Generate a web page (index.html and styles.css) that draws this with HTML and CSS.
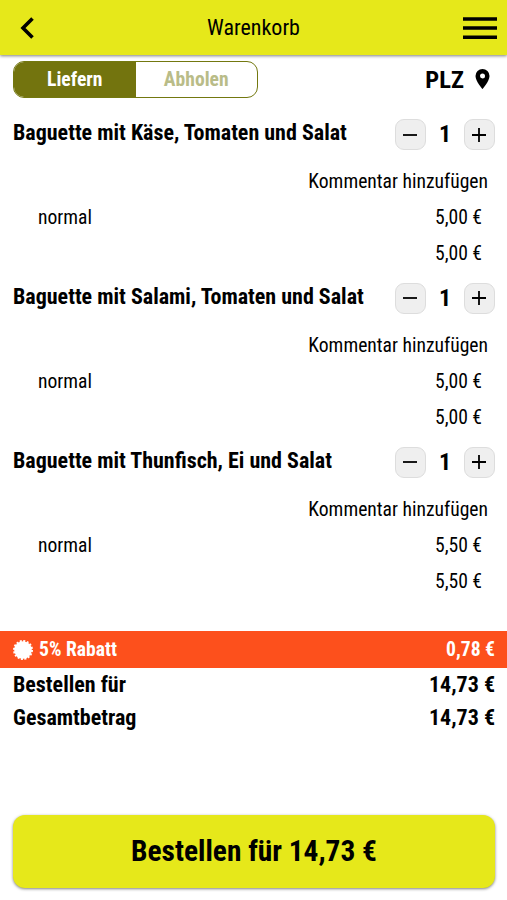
FILE: index.html
```html
<!DOCTYPE html>
<html lang="de">
<head>
<meta charset="utf-8">
<title>Warenkorb</title>
<link rel="stylesheet" href="styles.css">
</head>
<body>
<header class="topbar">
  <svg class="back" width="16" height="24" viewBox="0 0 16 24"><path d="M13.500 2.500 4 12l9.500 9.500" fill="none" stroke="#000" stroke-width="3.600"/></svg>
  <h1 class="title">Warenkorb</h1>
  <svg class="menu" width="34" height="24" viewBox="0 0 34 24"><path d="M0 3h34M0 12h34M0 21.200h34" stroke="#000" stroke-width="3.600"/></svg>
</header>
<main>
  <div class="mode">
    <div class="toggle"><span class="tab active">Liefern</span><span class="tab">Abholen</span></div>
    <div class="plz"><span>PLZ</span><svg width="15" height="20" viewBox="0 0 14 20"><path fill-rule="evenodd" d="M7 0a7 7 0 0 0-7 7c0 5.200 7 13 7 13s7-7.800 7-13a7 7 0 0 0-7-7zm0 4.500a2.500 2.500 0 1 1 0 5 2.500 2.500 0 0 1 0-5z"/></svg></div>
  </div>
  <section class="item">
    <div class="head"><h2 class="name">Baguette mit Käse, Tomaten und Salat</h2>
      <div class="stepper"><button class="step"><svg width="14" height="14"><path d="M0 7h14"/></svg></button><span class="count">1</span><button class="step"><svg width="14" height="14"><path d="M0 7h14M7 0v14"/></svg></button></div></div>
    <div class="comment">Kommentar hinzufügen</div>
    <div class="line"><span>normal</span><span>5,00 €</span></div>
    <div class="line sum"><span>5,00 €</span></div>
  </section>
  <section class="item">
    <div class="head"><h2 class="name">Baguette mit Salami, Tomaten und Salat</h2>
      <div class="stepper"><button class="step"><svg width="14" height="14"><path d="M0 7h14"/></svg></button><span class="count">1</span><button class="step"><svg width="14" height="14"><path d="M0 7h14M7 0v14"/></svg></button></div></div>
    <div class="comment">Kommentar hinzufügen</div>
    <div class="line"><span>normal</span><span>5,00 €</span></div>
    <div class="line sum"><span>5,00 €</span></div>
  </section>
  <section class="item">
    <div class="head"><h2 class="name">Baguette mit Thunfisch, Ei und Salat</h2>
      <div class="stepper"><button class="step"><svg width="14" height="14"><path d="M0 7h14"/></svg></button><span class="count">1</span><button class="step"><svg width="14" height="14"><path d="M0 7h14M7 0v14"/></svg></button></div></div>
    <div class="comment">Kommentar hinzufügen</div>
    <div class="line"><span>normal</span><span>5,50 €</span></div>
    <div class="line sum"><span>5,50 €</span></div>
  </section>
  <div class="discount">
    <svg width="20" height="20" viewBox="-10 -10 20 20"><circle r="8.800" fill="#fff"/><circle r="9" fill="none" stroke="#fff" stroke-width="2" stroke-dasharray="2 1.534"/></svg>
    <span class="label">5% Rabatt</span><span class="label amount">0,78 €</span>
  </div>
  <div class="total"><span>Bestellen für</span><span>14,73 €</span></div>
  <div class="total"><span>Gesamtbetrag</span><span>14,73 €</span></div>
</main>
<button class="order">Bestellen für 14,73 €</button>
</body>
</html>
```
FILE: styles.css
```css
* { box-sizing: border-box; }
body {
  margin: 0;
  height: 900px;
  display: flex;
  flex-direction: column;
  background: #fff;
  color: #000;
  font-family: "Roboto Condensed", Roboto, sans-serif;
  font-stretch: 75%;
  font-size: 19.600px;
  overflow: hidden;
}
h1, h2 { margin: 0; }
svg { display: block; flex: none; }
button { font: inherit; color: inherit; padding: 0; border: 0; }
.topbar {
  height: 55px;
  flex: none;
  display: grid;
  grid-template-columns: 34px 1fr 34px;
  align-items: center;
  padding: 0 10px 0 19px;
  background: #e6e81a;
  box-shadow: 0 1px 3px rgba(0, 0, 0, .5);
}
.title { font-size: 22px; font-weight: 400; text-align: center; padding-right: 9px; }
.mode {
  height: 48px;
  display: flex;
  align-items: center;
  justify-content: space-between;
  padding: 0 17px 0 13px;
}
.toggle {
  display: flex;
  width: 245px;
  height: 37px;
  border: 1px solid #73780f;
  border-radius: 11px;
  overflow: hidden;
}
.tab { flex: 1; line-height: 35px; text-align: center; font-weight: 700; color: #b9bc88; }
.active { background: #73740e; color: #fff; }
.plz { display: flex; align-items: center; gap: 11px; font-size: 24.500px; font-weight: 700; }
.item { height: 163.800px; padding: 16px 12px 0 13px; }
.head { display: flex; justify-content: space-between; height: 46px; }
.name { font-size: 22px; line-height: 28px; font-weight: 700; white-space: nowrap; }
.stepper { display: flex; align-items: flex-start; }
.step {
  width: 31px;
  height: 31px;
  display: grid;
  place-items: center;
  background: #efefef;
  border: 1px solid #ddd;
  border-radius: 9px;
}
.step svg { margin-right: 1px; }
.step path { stroke: #000; stroke-width: 1.800; }
.count { width: 38px; line-height: 31px; text-align: center; font-size: 24px; font-weight: 700; }
.comment { line-height: 34px; text-align: right; padding-right: 7px; }
.line { display: flex; justify-content: space-between; line-height: 38px; padding: 0 13px 0 25px; }
.sum { justify-content: flex-end; line-height: 34px; }
.discount {
  height: 37px;
  margin-top: 37px;
  display: flex;
  align-items: center;
  gap: 6px;
  padding: 0 12px 0 13px;
  background: #fd501c;
  color: #fff;
  font-weight: 700;
}
.label { line-height: 38px; }
.amount { margin-left: auto; }
.total { display: flex; justify-content: space-between; padding: 0 12px 0 13px; line-height: 33px; font-size: 22px; font-weight: 700; }
.order {
  margin: auto 12px 12px 13px;
  height: 73px;
  flex: none;
  border-radius: 12px;
  background: #e6e81a;
  box-shadow: 0 1px 3px rgba(0, 0, 0, .5);
  font-size: 29.400px;
  font-weight: 700;
  padding-bottom: 2px;
}
```
